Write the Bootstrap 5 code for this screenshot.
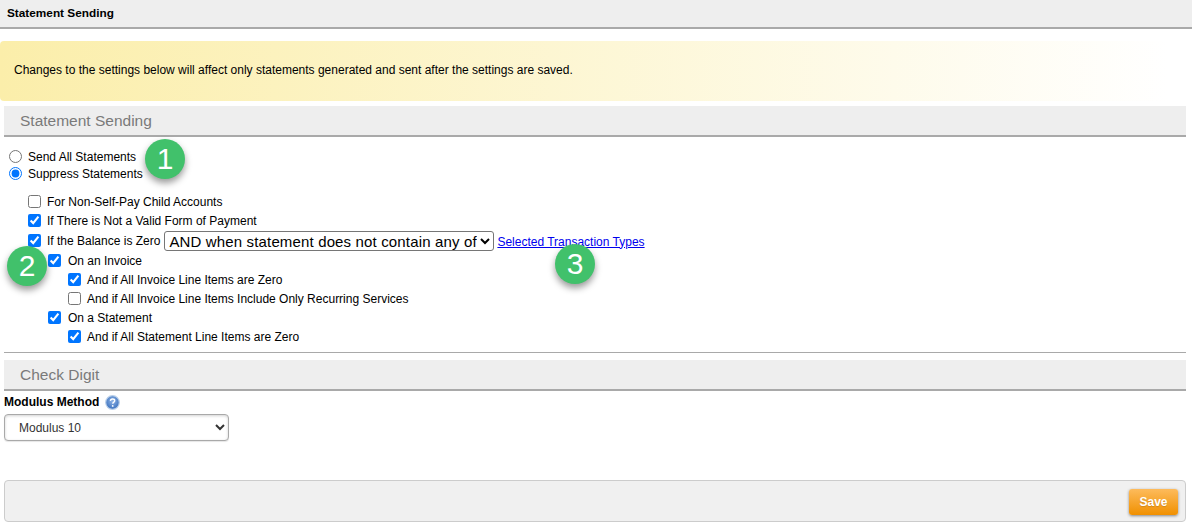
<!DOCTYPE html>
<html lang="en">
<head>
<meta charset="utf-8">
<title>Statement Sending</title>
<link rel="stylesheet" href="https://cdn.jsdelivr.net/npm/bootstrap@5.3.0/dist/css/bootstrap.min.css">
<style>
html, body { height: 100%; }
body { font-family: "Liberation Sans", Arial, sans-serif; font-size: 12px; color: #000; background: #fff; position: relative; overflow: hidden; line-height: 14px; }
.top-title { height: 29px; background: #eee; border-bottom: 2px solid #a9a9a9; padding: 6px 7px 0; font-size: 11.8px; font-weight: 700; }
.notice-band { height: 60px; margin-top: 12px; padding: 0 0 2px 14px; border-radius: 4px 0 0 4px; background: linear-gradient(to right, #fbeeaa, #ffffff 98%); }
.section-head { height: 31px; margin: 5px 6px 0 4px; padding: 6px 0 0 16px; background: #eee; border-bottom: 2px solid #a9a9a9; font-size: 15.5px; line-height: 18px; color: #7a7a7a; }
.opt-row { margin: 0; }
.opt-row input { margin: 0 6px 0 0; flex: none; width: 13px; height: 13px; }
.radios { padding: 11px 0 0 9px; }
.radios .opt-row { height: 17px; }
.checks { padding: 10px 0 0 28px; }
.checks .opt-row { height: 19px; }
.lvl-1 { padding-left: 20px; }
.lvl-1 input.wide-gap { margin-right: 7px; }
.lvl-2 { padding-left: 40px; }
.checks .zero-row { height: 21px; }
.zero-row select { font-family: "Liberation Sans", Arial, sans-serif; font-size: 15px; width: 330px; height: 20px; margin: 0 3px 0 4px; padding: 0; background: #fff; color: #000; border: 1px solid #767676; border-radius: 3px; letter-spacing: .15px; }
.zero-row a { color: #00e; margin-top: 2px; }
.rule-line { height: 1px; margin: 6px 6px 0 4px; background: #a9a9a9; }
.section-gap { margin-top: 7px; }
.field-name { margin: 4px 0 0 4px; height: 14px; font-weight: 700; }
.help-mark { margin-left: 6px; }
.mod-select { display: block; width: 225px; height: 27px; margin: 5px 0 0 4px; padding: 0 0 0 10px; font-family: "Liberation Sans", Arial, sans-serif; font-size: 12px; color: #333; background: #fff; border: 1px solid #a9a9a9; border-radius: 4px; box-shadow: inset 0 1px 3px rgba(0,0,0,.18), 0 1px 1px rgba(0,0,0,.1); }
.foot-bar { height: 42px; margin: 39px 6px 0 4px; padding: 8px 7px 0 0; background: #f0f0f0; border: 1px solid #ccc; border-radius: 4px; }
.save-btn { width: 49px; height: 26px; padding: 0; font-size: 12px; font-weight: 700; color: #fff; border: 0; border-radius: 3px; background: linear-gradient(#fdbb5c, #f09000); box-shadow: 0 1px 3px rgba(0,0,0,.45); text-shadow: 0 1px 1px rgba(0,0,0,.15); }
.step-dot { position: absolute; width: 40px; height: 40px; border-radius: 50%; background: #41c16b; color: #fff; font-size: 30px; line-height: 40px; text-align: center; box-shadow: 0 4px 7px rgba(0,0,0,.4); }
.dot-1 { left: 145px; top: 139px; }
.dot-2 { left: 7px; top: 246px; }
.dot-3 { left: 555px; top: 244px; }
</style>
</head>
<body>
<div class="top-title">Statement Sending</div>
<div class="notice-band d-flex align-items-center">Changes to the settings below will affect only statements generated and sent after the settings are saved.</div>
<div class="section-head">Statement Sending</div>
<div class="radios">
  <label class="opt-row d-flex align-items-center"><input type="radio" name="mode">Send All Statements</label>
  <label class="opt-row d-flex align-items-center"><input type="radio" name="mode" checked>Suppress Statements</label>
</div>
<div class="checks">
  <label class="opt-row d-flex align-items-center"><input type="checkbox">For Non-Self-Pay Child Accounts</label>
  <label class="opt-row d-flex align-items-center"><input type="checkbox" checked>If There is Not a Valid Form of Payment</label>
  <div class="opt-row zero-row d-flex align-items-center">
    <input type="checkbox" checked><span>If the Balance is Zero</span>
    <select><option>AND when statement does not contain any of</option></select>
    <a href="#">Selected Transaction Types</a>
  </div>
  <label class="opt-row lvl-1 d-flex align-items-center"><input class="wide-gap" type="checkbox" checked>On an Invoice</label>
  <label class="opt-row lvl-2 d-flex align-items-center"><input type="checkbox" checked>And if All Invoice Line Items are Zero</label>
  <label class="opt-row lvl-2 d-flex align-items-center"><input type="checkbox">And if All Invoice Line Items Include Only Recurring Services</label>
  <label class="opt-row lvl-1 d-flex align-items-center"><input class="wide-gap" type="checkbox" checked>On a Statement</label>
  <label class="opt-row lvl-2 d-flex align-items-center"><input type="checkbox" checked>And if All Statement Line Items are Zero</label>
</div>
<div class="rule-line"></div>
<div class="section-head section-gap">Check Digit</div>
<div class="field-name d-flex align-items-center">Modulus Method
  <svg class="help-mark" width="15" height="15" viewBox="0 0 15 15" aria-hidden="true">
    <defs><radialGradient id="hg" cx="50%" cy="40%" r="60%"><stop offset="0" stop-color="#8fb4e6"/><stop offset="1" stop-color="#3a70bd"/></radialGradient></defs>
    <circle cx="7.5" cy="7.5" r="6.8" fill="url(#hg)" stroke="#b9cfe9" stroke-width="1.2"/>
    <path d="M5.4 5.9c.1-1.3 1-1.9 2.2-1.9s2.1.7 2.1 1.7c0 1.4-1.9 1.5-1.9 3" fill="none" stroke="#fff" stroke-width="1.4"/>
    <circle cx="7.7" cy="10.9" r=".9" fill="#fff"/>
  </svg>
</div>
<select class="mod-select"><option>Modulus 10</option></select>
<div class="foot-bar d-flex justify-content-end align-items-start">
  <button type="button" class="btn save-btn">Save</button>
</div>
<div class="step-dot dot-1">1</div>
<div class="step-dot dot-2">2</div>
<div class="step-dot dot-3">3</div>
<script src="https://cdn.jsdelivr.net/npm/bootstrap@5.3.0/dist/js/bootstrap.bundle.min.js"></script>
</body>
</html>
